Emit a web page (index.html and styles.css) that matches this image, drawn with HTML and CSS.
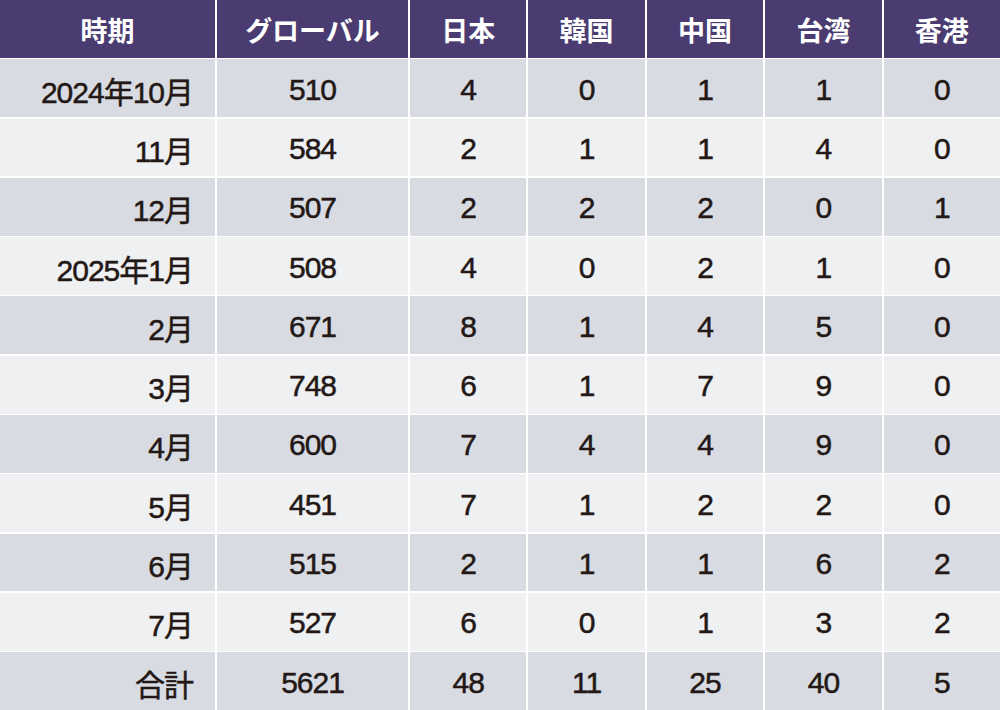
FILE: index.html
```html
<!DOCTYPE html>
<html lang="ja">
<head>
<meta charset="utf-8">
<link rel="stylesheet" href="styles.css">
</head>
<body>
<div class="table">
  <div class="th">時期</div><div class="th">グローバル</div><div class="th">日本</div><div class="th">韓国</div><div class="th">中国</div><div class="th">台湾</div><div class="th">香港</div>

  <div class="td label dark">2024年10月</div><div class="td dark">510</div><div class="td dark">4</div><div class="td dark">0</div><div class="td dark">1</div><div class="td dark">1</div><div class="td dark">0</div>
  <div class="td label light">11月</div><div class="td light">584</div><div class="td light">2</div><div class="td light">1</div><div class="td light">1</div><div class="td light">4</div><div class="td light">0</div>
  <div class="td label dark">12月</div><div class="td dark">507</div><div class="td dark">2</div><div class="td dark">2</div><div class="td dark">2</div><div class="td dark">0</div><div class="td dark">1</div>
  <div class="td label light">2025年1月</div><div class="td light">508</div><div class="td light">4</div><div class="td light">0</div><div class="td light">2</div><div class="td light">1</div><div class="td light">0</div>
  <div class="td label dark">2月</div><div class="td dark">671</div><div class="td dark">8</div><div class="td dark">1</div><div class="td dark">4</div><div class="td dark">5</div><div class="td dark">0</div>
  <div class="td label light">3月</div><div class="td light">748</div><div class="td light">6</div><div class="td light">1</div><div class="td light">7</div><div class="td light">9</div><div class="td light">0</div>
  <div class="td label dark">4月</div><div class="td dark">600</div><div class="td dark">7</div><div class="td dark">4</div><div class="td dark">4</div><div class="td dark">9</div><div class="td dark">0</div>
  <div class="td label light">5月</div><div class="td light">451</div><div class="td light">7</div><div class="td light">1</div><div class="td light">2</div><div class="td light">2</div><div class="td light">0</div>
  <div class="td label dark">6月</div><div class="td dark">515</div><div class="td dark">2</div><div class="td dark">1</div><div class="td dark">1</div><div class="td dark">6</div><div class="td dark">2</div>
  <div class="td label light">7月</div><div class="td light">527</div><div class="td light">6</div><div class="td light">0</div><div class="td light">1</div><div class="td light">3</div><div class="td light">2</div>
  <div class="td label dark">合計</div><div class="td dark">5621</div><div class="td dark">48</div><div class="td dark">11</div><div class="td dark">25</div><div class="td dark">40</div><div class="td dark">5</div>
</div>
</body>
</html>
```
FILE: styles.css
```css
html, body {
  margin: 0;
  padding: 0;
  background: #ffffff;
}
body {
  width: 1000px;
  height: 710px;
  overflow: hidden;
  font-family: "Liberation Sans", "Noto Sans CJK JP", sans-serif;
}
.table {
  display: grid;
  width: 1000px;
  height: 710px;
  grid-template-columns: 215px 191px repeat(5, 1fr);
  grid-template-rows: repeat(12, 1fr);
  column-gap: 2px;
  row-gap: 1.5px;
  background: #ffffff;
}
.th {
  background: #4a3c70;
  color: #ffffff;
  font-family: "Noto Sans CJK JP", sans-serif;
  font-weight: 700;
  font-size: 27px;
  display: flex;
  align-items: center;
  justify-content: center;
  padding-top: 1px;
}
.td {
  color: #231815;
  font-size: 30px;
  display: flex;
  align-items: center;
  justify-content: center;
  padding-top: 3px;
  letter-spacing: -1px;
  -webkit-text-stroke: 0.5px #231815;
}
.td.label {
  justify-content: flex-end;
  padding-right: 22px;
}
.dark {
  background: #d8dce2;
}
.light {
  background: #eff0f2;
}
```
